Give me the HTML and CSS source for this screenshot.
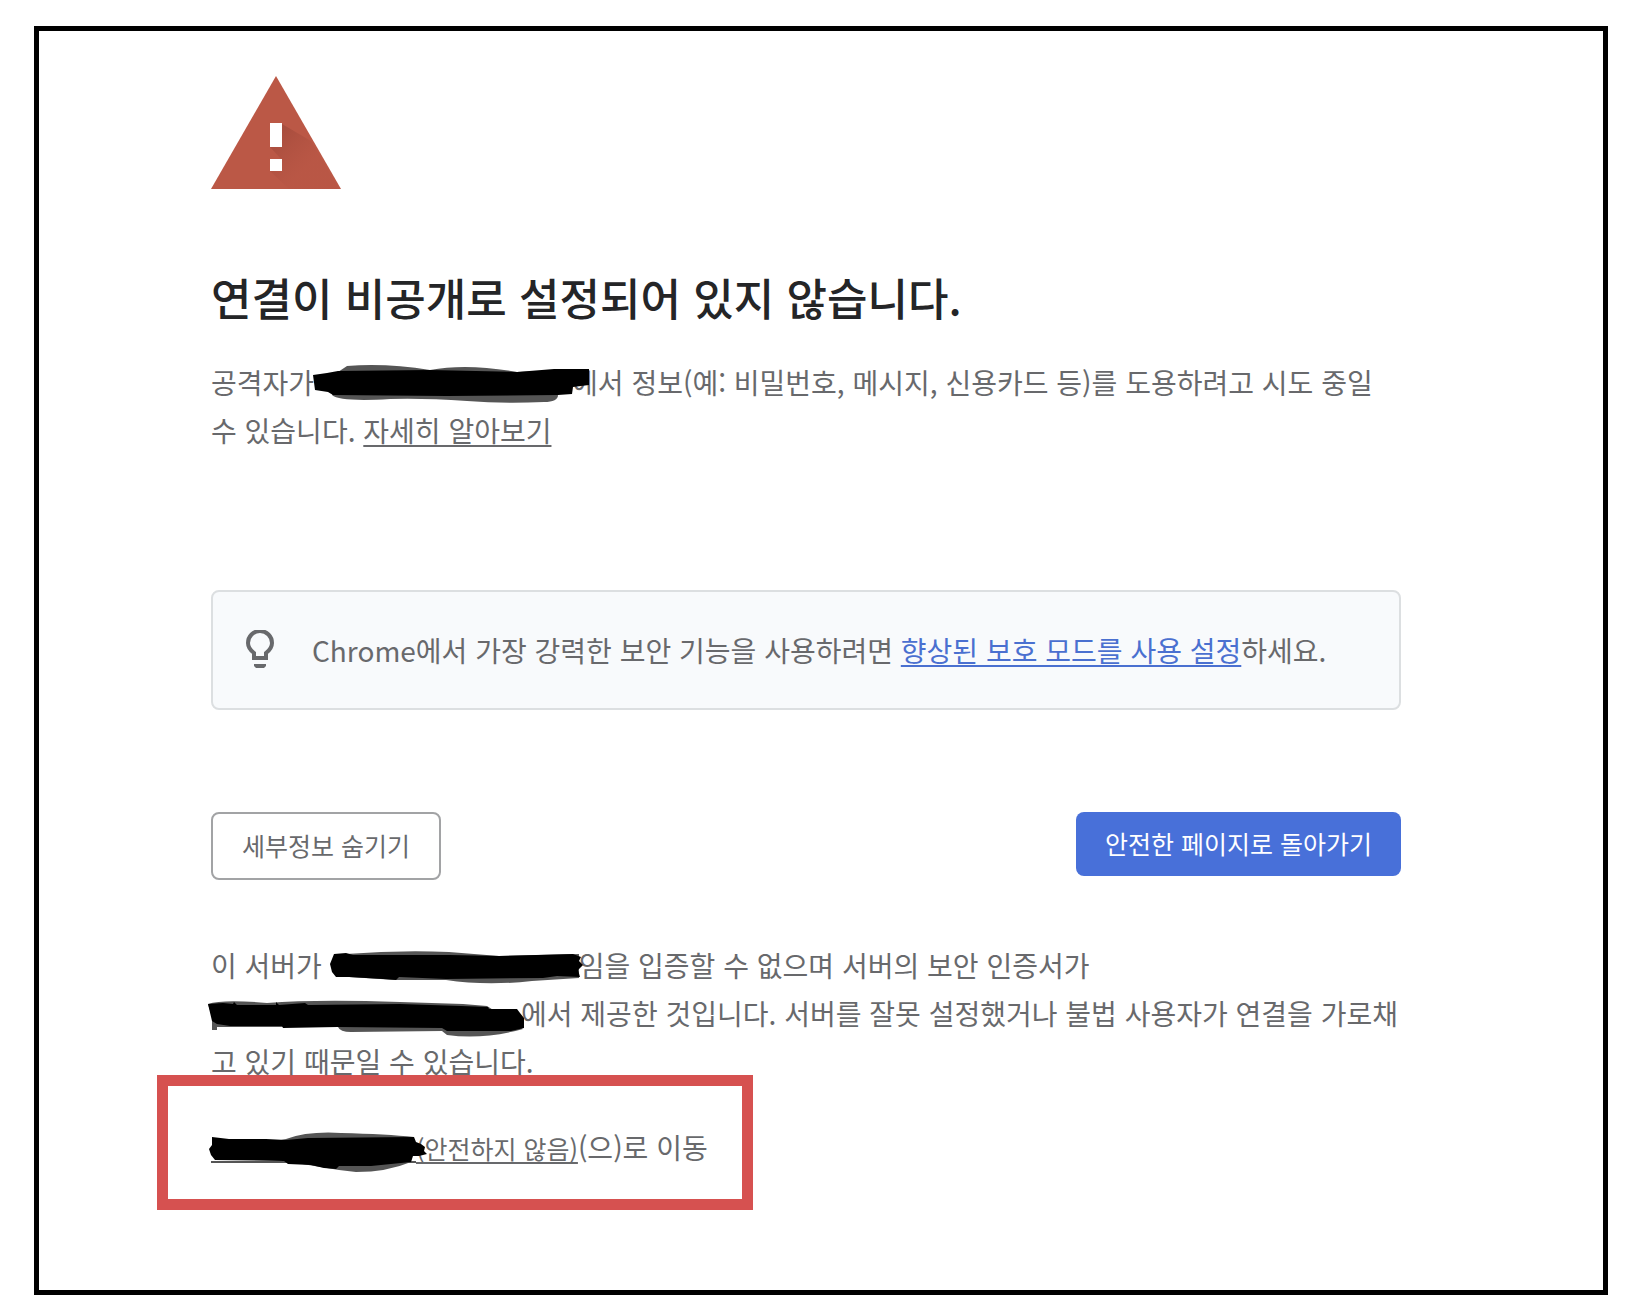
FILE: index.html
```html
<!DOCTYPE html>
<html lang="ko">

<head>
    <meta charset="UTF-8">
    <meta name="viewport" content="width=device-width, initial-scale=1.0">
    <title>개인 정보 보호 오류</title>
    <link rel="stylesheet" href="styles.css">
</head>

<body>
    <main class="frame">
        <!-- 경고 아이콘 -->
        <svg class="warning" viewBox="0 0 130 113" aria-hidden="true">
            <defs>
                <linearGradient id="shadow" gradientUnits="userSpaceOnUse" x1="64" y1="62" x2="94" y2="92">
                    <stop offset="0" stop-color="#9c4638" />
                    <stop offset="1" stop-color="#b35242" stop-opacity=".4" />
                </linearGradient>
            </defs>
            <path d="M65 0L130 113H0z" fill="#bb5846" />
            <path d="M71 48L100 65L128 113H78L59 95H71V84L59 71H71z" fill="url(#shadow)" opacity=".6" />
            <path d="M59 47h12v24H59zM59 83h12v12H59z" fill="#fff" />
        </svg>

        <h1>연결이 비공개로 설정되어 있지 않습니다.</h1>
        <p class="text">공격자가<svg class="mask mask1" viewBox="0 0 258 40">
                <path class="soft" d="M24 10L33 4Q73 1 116 8Q153 1 203 10L274 7L244 33Q244 40 230 40Q190 42 153 39Q110 36 76 37Q26 40 18 33z" />
                <path d="M-1 13L13 11L24 9L116 8L203 10L240 7L275 7V23L259 25L258 32L244 33L133 34L19 33L14 30L1 28z" />
            </svg>에서 정보(예: 비밀번호, 메시지, 신용카드 등)를 도용하려고 시도 중일 수 있습니다. <a href="#">자세히 알아보기</a></p>

        <!-- 향상된 보호 모드 안내 -->
        <section class="tip">
            <svg class="bulb" viewBox="0 0 28 38" aria-hidden="true">
                <path d="M8 28V23C4 20 2 17 2 13a12 12 0 0 1 24 0c0 4-2 7-6 10v5z" fill="none" stroke="#68696c" stroke-width="4" />
                <path d="M8 34h12v2l-2 2h-8l-2-2z" fill="#68696c" />
            </svg>
            <p>Chrome에서 가장 강력한 보안 기능을 사용하려면 <a href="#">향상된 보호 모드를 사용 설정</a>하세요.</p>
        </section>

        <div class="buttons">
            <button class="details-btn">세부정보 숨기기</button>
            <button class="safe-btn">안전한 페이지로 돌아가기</button>
        </div>

        <!-- 세부정보 -->
        <p class="text">이 서버가 <svg class="mask mask2" viewBox="7 0 249 40">
                <path class="soft" d="M23 9Q76 5 126 7L176 11L256 9V33L209 36Q163 41 123 35L73 35L26 32z" />
                <path d="M7 19L11 9L23 8L30 10L126 10L176 11L250 9L258 12L256 16L260 20L255 25L257 32L234 31L220 33L123 34L76 32L73 35L60 34L26 32H13L9 27z" />
            </svg>임을 입증할 수 없으며 서버의 보안 인증서가 <svg class="mask mask3" viewBox="0 0 310 40">
                <path class="soft" d="M-3 11Q12 6 56 10Q106 6 189 9L252 11L276 13L312 36Q272 47 236 42L231 38L140 39Q129 39 127 34H6V37H1V24z" />
                <path d="M-3 11L12 10L22 11L23 9L26 12L65 12V9L68 12L94 10L97 12L189 11L250 13L277 14L278 16L306 16L309 20L313 25V35L300 38L236 38L231 35L127 34L72 35L71 33L19 33L6 31L1 28z" />
            </svg>에서 제공한 것입니다. 서버를 잘못 설정했거나 불법 사용자가 연결을 가로채고 있기 때문일 수 있습니다.</p>

        <div class="proceed">
            <a href="#"><svg class="mask mask4" viewBox="0 0 205 40">
                    <path class="soft" d="M0 34H205V36H0z" />
                    <path class="soft" d="M60 15L75 12Q97 4 130 6Q176 7 203 10L200 35Q176 45 145 45L128 43L73 34z" />
                    <path d="M1 10L18 12L55 12L75 13L97 11L203 10L205 15L210 17L214 20L213 24L216 27L208 29L202 29L200 35L160 39L128 39L125 42L113 41L100 38L77 37L73 34L4 33L0 28L-2 22L1 18z" />
                </svg>(안전하지 않음)</a>(으)로 이동
        </div>
    </main>
</body>

</html>
```

FILE: styles.css
```css
* {
    margin: 0;
    padding: 0;
    box-sizing: border-box;
}

body {
    background-color: #fff;
    color: #68696c;
    font-family: "Noto Sans CJK KR", sans-serif;
    font-size: 28px;
    line-height: 48px;
}

.frame {
    margin: 26px 22px 15px 34px;
    padding: 45px 202px 80px 172px;
    border: 5px solid #000;
}

.warning {
    display: block;
    width: 130px;
    height: 113px;
}

h1 {
    margin-top: 76px;
    color: #242527;
    font-size: 44px;
    font-weight: 500;
    line-height: 64px;
}

.text {
    margin-top: 29px;
}

.text a,
.proceed a {
    color: inherit;
}

a {
    text-underline-offset: 3px;
    text-decoration-thickness: 2px;
}

/* 주소를 가리는 선 */
.mask {
    position: relative;
    height: 40px;
    vertical-align: -8px;
    overflow: visible;
}

.mask .soft {
    fill: #555;
}

.mask1 {
    width: 258px;
}

.mask2 {
    width: 249px;
}

.mask3 {
    width: 310px;
}

.mask4 {
    width: 205px;
}

.tip {
    display: flex;
    gap: 38px;
    margin-top: 136px;
    padding: 34px 33px;
    border: 2px solid #dcdfe1;
    border-radius: 8px;
    background-color: #f8fafc;
}

.tip a {
    color: #4a70d0;
}

.bulb {
    flex: none;
    width: 28px;
    height: 38px;
    margin-top: 4px;
}

.buttons {
    display: flex;
    justify-content: space-between;
    align-items: flex-start;
    margin-top: 102px;
}

button {
    padding: 13px 29px 15px;
    border-radius: 8px;
    font-family: inherit;
    font-size: 25px;
    line-height: 36px;
}

.details-btn {
    border: 2px solid #a2a3a5;
    background-color: #fff;
    color: #68696c;
}

.safe-btn {
    border: none;
    background-color: #4870d9;
    color: #fff;
}

.buttons + .text {
    margin-top: 61px;
}

/* 강조 박스 */
.proceed {
    width: 596px;
    margin-top: -10px;
    margin-left: -54px;
    padding: 37px 32px 27px 43px;
    border: 11px solid #d65150;
}

.proceed a {
    font-size: 25px;
}
```
